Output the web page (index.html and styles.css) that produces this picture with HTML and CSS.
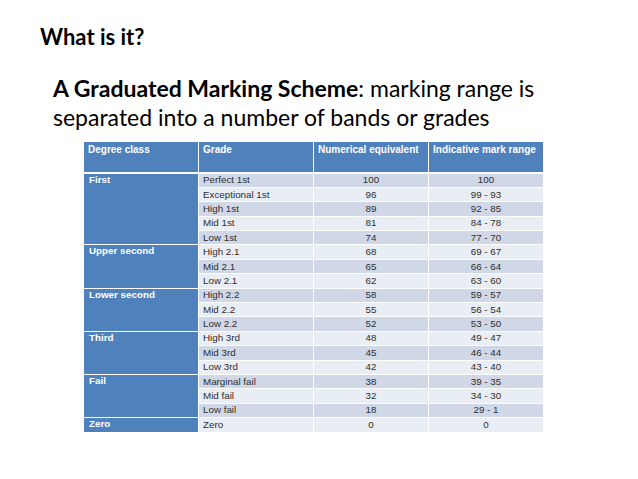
FILE: index.html
```html
<!DOCTYPE html>
<html>
<head>
<meta charset="utf-8">
<link rel="stylesheet" href="styles.css">
</head>
<body>
<div class="slide">
  <h1 class="title">What is it?</h1>
  <p class="lead"><b>A Graduated Marking Scheme</b>: marking range is separated into a number of bands or grades</p>
  <table class="grades">
    <thead>
      <tr><th>Degree class</th><th>Grade</th><th>Numerical equivalent</th><th>Indicative mark range</th></tr>
    </thead>
    <tbody>
      <tr class="d"><td class="cls" rowspan="5">First</td><td>Perfect 1st</td><td class="c">100</td><td class="c">100</td></tr>
      <tr class="l"><td>Exceptional 1st</td><td class="c">96</td><td class="c">99 - 93</td></tr>
      <tr class="d"><td>High 1st</td><td class="c">89</td><td class="c">92 - 85</td></tr>
      <tr class="l"><td>Mid 1st</td><td class="c">81</td><td class="c">84 - 78</td></tr>
      <tr class="d"><td>Low 1st</td><td class="c">74</td><td class="c">77 - 70</td></tr>
      <tr class="l"><td class="cls" rowspan="3">Upper second</td><td>High 2.1</td><td class="c">68</td><td class="c">69 - 67</td></tr>
      <tr class="d"><td>Mid 2.1</td><td class="c">65</td><td class="c">66 - 64</td></tr>
      <tr class="l"><td>Low 2.1</td><td class="c">62</td><td class="c">63 - 60</td></tr>
      <tr class="d"><td class="cls" rowspan="3">Lower second</td><td>High 2.2</td><td class="c">58</td><td class="c">59 - 57</td></tr>
      <tr class="l"><td>Mid 2.2</td><td class="c">55</td><td class="c">56 - 54</td></tr>
      <tr class="d"><td>Low 2.2</td><td class="c">52</td><td class="c">53 - 50</td></tr>
      <tr class="l"><td class="cls" rowspan="3">Third</td><td>High 3rd</td><td class="c">48</td><td class="c">49 - 47</td></tr>
      <tr class="d"><td>Mid 3rd</td><td class="c">45</td><td class="c">46 - 44</td></tr>
      <tr class="l"><td>Low 3rd</td><td class="c">42</td><td class="c">43 - 40</td></tr>
      <tr class="d"><td class="cls" rowspan="3">Fail</td><td>Marginal fail</td><td class="c">38</td><td class="c">39 - 35</td></tr>
      <tr class="l"><td>Mid fail</td><td class="c">32</td><td class="c">34 - 30</td></tr>
      <tr class="d"><td>Low fail</td><td class="c">18</td><td class="c">29 - 1</td></tr>
      <tr class="l"><td class="cls">Zero</td><td>Zero</td><td class="c">0</td><td class="c">0</td></tr>
    </tbody>
  </table>
</div>
</body>
</html>
```
FILE: styles.css
```css
html, body {
  margin: 0;
  padding: 0;
  background: #ffffff;
}
.slide {
  width: 638px;
  height: 479px;
  overflow: hidden;
  padding-top: 24px;
  box-sizing: border-box;
}
.title {
  margin: 0 0 0 40px;
  font-family: Lato, "Open Sans", sans-serif;
  font-weight: 700;
  font-size: 22px;
  line-height: 26px;
  color: #000;
}
.lead {
  margin: 24px 0 0 53px;
  width: 520px;
  font-family: Lato, "Open Sans", sans-serif;
  font-size: 23px;
  line-height: 29px;
  color: #000;
}
.lead b {
  font-weight: 700;
}
.grades {
  margin: 9px 0 0 83px;
  width: 457px;
  border-collapse: collapse;
  table-layout: fixed;
  font-family: "Liberation Sans", Arial, sans-serif;
  font-size: 9.8px;
}
.grades th {
  background: #4f81bd;
  color: #fff;
  font-weight: 700;
  font-size: 10px;
  text-align: left;
  vertical-align: top;
  white-space: nowrap;
  height: 31px;
  padding: 2px 4px 0;
  line-height: 12px;
  border: 1px solid #fff;
  border-bottom-width: 2px;
  box-sizing: border-box;
  width: 115px;
}
.grades td {
  height: 13.4px;
  padding: 0 4px;
  line-height: 12px;
  border: 1px solid #fff;
  color: #2e2e2e;
  vertical-align: middle;
  white-space: nowrap;
}
.grades tr.d td { background: #d0d8e8; }
.grades tr.l td { background: #e9edf4; }
.grades tr td.cls {
  background: #4f81bd;
  color: #fff;
  font-weight: 700;
  vertical-align: top;
  padding-left: 5px;
}
.grades td.c {
  text-align: center;
}
```
